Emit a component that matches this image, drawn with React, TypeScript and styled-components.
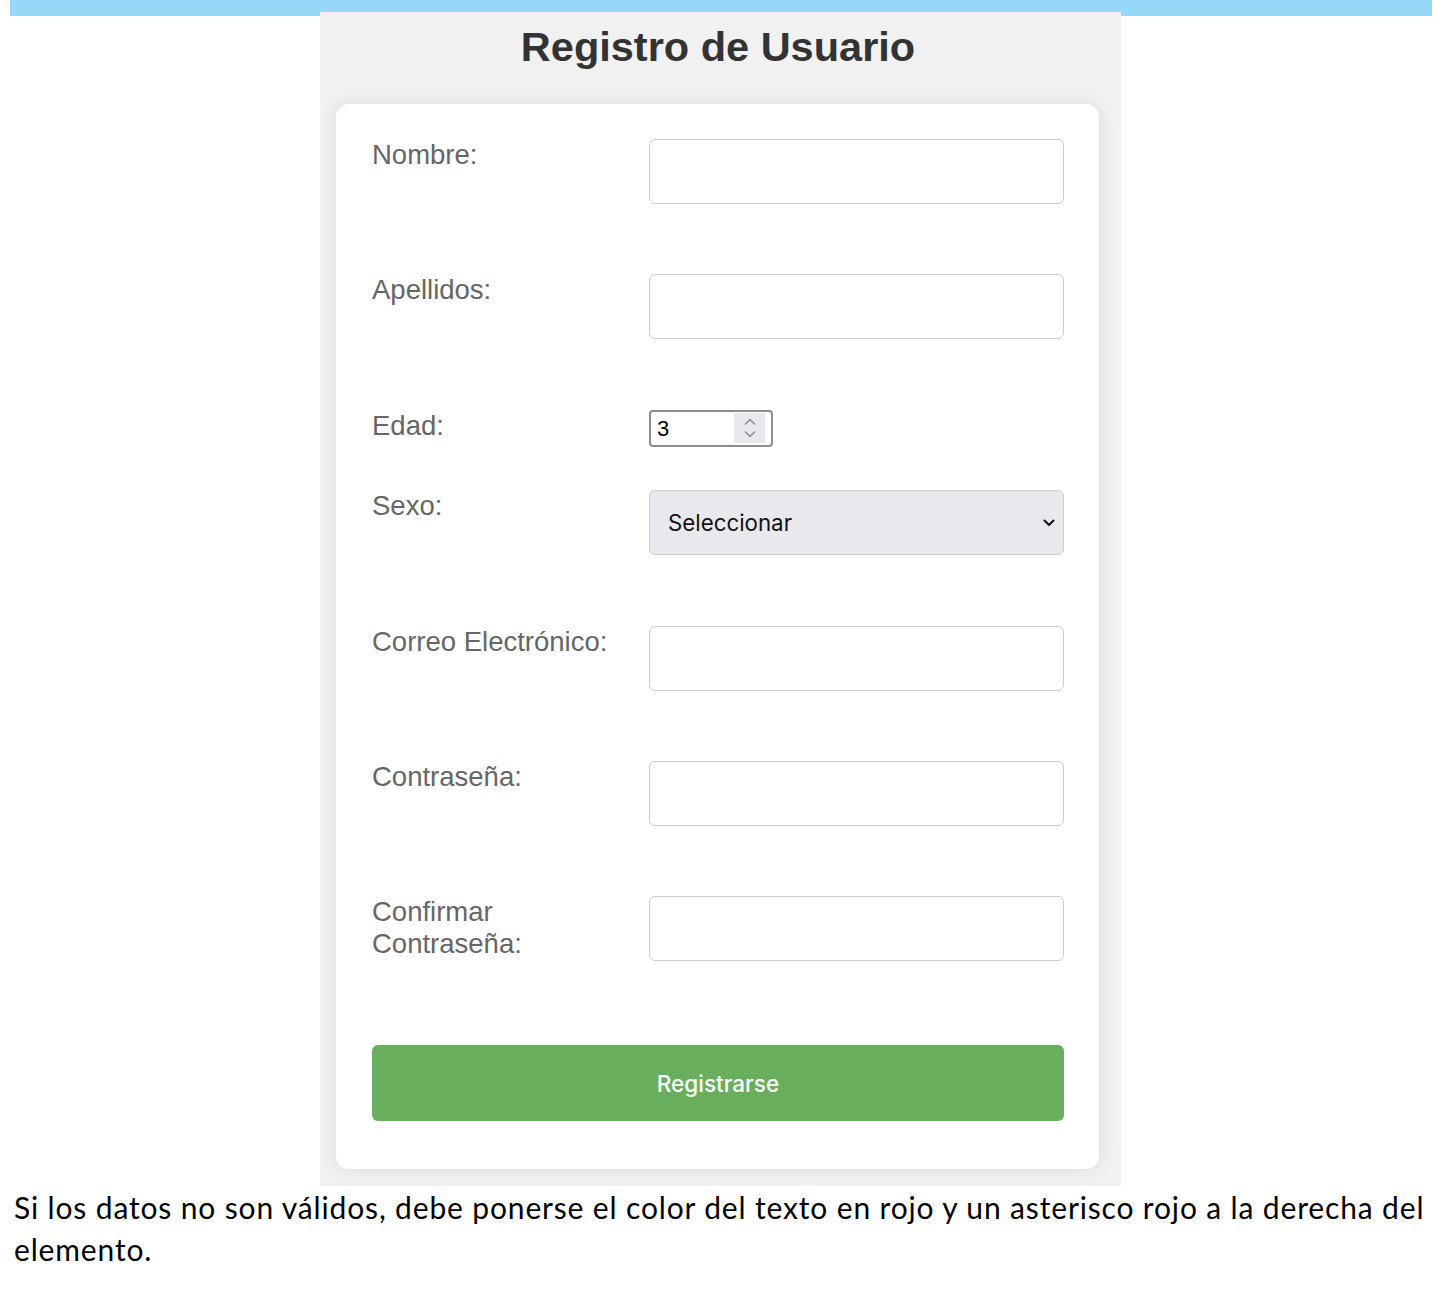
import React from "react";
import styled, { createGlobalStyle } from "styled-components";

const GlobalStyle = createGlobalStyle`
  html, body {
    margin: 0;
    padding: 0;
    background: #ffffff;
  }
  * { box-sizing: border-box; }
`;

const Page = styled.div`
  display: flex;
  flex-direction: column;
  width: 1446px;
  min-height: 1296px;
  background: #ffffff;
`;

const TopBar = styled.div`
  height: 16px;
  margin: 0 14px 0 10px;
  background: #96d8f8;
`;

const Panel = styled.main`
  position: relative;
  width: 801px;
  margin: -4px 0 0 320px;
  padding: 11px 22px 17px 16px;
  background: #f1f1f1;
  display: flex;
  flex-direction: column;
`;

const Title = styled.h1`
  margin: 0 0 33px 0;
  text-align: center;
  font-family: "Liberation Sans", Arial, sans-serif;
  font-weight: 700;
  font-size: 41.5px;
  line-height: 48px;
  color: #333333;
  padding-left: 1px;
`;

const Card = styled.form`
  background: #ffffff;
  border-radius: 13px;
  box-shadow: 0 0 18px rgba(0, 0, 0, 0.09);
  padding: 35px 35px 48px 36px;
  display: flex;
  flex-direction: column;
`;

const Row = styled.div`
  display: grid;
  grid-template-columns: 260px 1fr;
  column-gap: 17px;
  align-items: start;
  margin-bottom: 43.4px;
`;

const Label = styled.label`
  font-family: "Liberation Sans", Arial, sans-serif;
  font-size: 27.5px;
  line-height: 32px;
  color: #666666;
`;

const TextInput = styled.input`
  display: block;
  width: 415px;
  height: 65px;
  margin: 0 0 27px 0;
  padding: 0 16px;
  border: 1.5px solid #cccccc;
  border-radius: 6px;
  background: #ffffff;
  font-family: "Inter", sans-serif;
  font-size: 21px;
  outline: none;
`;

const NumberBox = styled.div`
  display: flex;
  align-items: center;
  width: 124px;
  height: 37px;
  padding: 2px 6px 2px 6px;
  border: 2px solid #8d8d93;
  border-radius: 4px;
  background: #ffffff;
`;

const NumberField = styled.input`
  flex: 1;
  min-width: 0;
  height: 100%;
  border: none;
  outline: none;
  padding: 2px 0 0 0;
  background: transparent;
  font-family: "Liberation Sans", Arial, sans-serif;
  font-size: 22px;
  color: #000000;
`;

const Spinner = styled.div`
  width: 31px;
  height: 30px;
  background: #e8e8ed;
  display: flex;
  align-items: center;
  justify-content: center;
`;

const SelectWrap = styled.div`
  position: relative;
  width: 415px;
  margin-bottom: 27px;
`;

const Select = styled.select`
  display: block;
  width: 100%;
  height: 65px;
  padding: 0 40px 0 18px;
  border: 1.5px solid #cccccc;
  border-radius: 6px;
  background: #e9e9ed;
  appearance: none;
  -webkit-appearance: none;
  font-family: "Inter", sans-serif;
  font-size: 22.3px;
  color: #111111;
  outline: none;
`;

const Chevron = styled.svg`
  position: absolute;
  right: 9px;
  top: 29px;
  pointer-events: none;
`;

const SubmitButton = styled.button`
  margin-top: 13.6px;
  height: 76px;
  width: 100%;
  border: none;
  border-radius: 6px;
  background: #69ae5d;
  color: #ffffff;
  font-family: "Inter", sans-serif;
  font-size: 22.5px;
  font-weight: 500;
  cursor: pointer;
`;

const Note = styled.p`
  margin: 0 14px 0 14px;
  font-family: "Lato", "Noto Sans", sans-serif;
  font-size: 30px;
  letter-spacing: 0.85px;
  line-height: 42px;
  color: #000000;
`;

type TextRowProps = { id: string; label: React.ReactNode; type?: string };

const TextRow = ({ id, label, type = "text" }: TextRowProps) => (
  <Row>
    <Label htmlFor={id}>{label}</Label>
    <TextInput id={id} type={type} />
  </Row>
);

export default function App() {
  return (
    <>
      <GlobalStyle />
      <Page>
        <TopBar />
        <Panel>
          <Title>Registro de Usuario</Title>
          <Card onSubmit={(e) => e.preventDefault()}>
            <TextRow id="nombre" label="Nombre:" />
            <TextRow id="apellidos" label="Apellidos:" />
            <Row>
              <Label htmlFor="edad">Edad:</Label>
              <NumberBox>
                <NumberField id="edad" defaultValue="3" />
                <Spinner>
                  <svg width="14" height="22" viewBox="0 0 14 22" fill="none">
                    <path d="M2.5 7 L7 2.5 L11.5 7" stroke="#8e8e93" strokeWidth="1.6" strokeLinecap="round" strokeLinejoin="round" />
                    <path d="M2.5 15 L7 19.5 L11.5 15" stroke="#8e8e93" strokeWidth="1.6" strokeLinecap="round" strokeLinejoin="round" />
                  </svg>
                </Spinner>
              </NumberBox>
            </Row>
            <Row>
              <Label htmlFor="sexo">Sexo:</Label>
              <SelectWrap>
                <Select id="sexo" defaultValue="">
                  <option value="">Seleccionar</option>
                  <option value="m">Masculino</option>
                  <option value="f">Femenino</option>
                </Select>
                <Chevron width="12" height="8" viewBox="0 0 12 8" fill="none">
                  <path d="M1.5 1.5 L6 6 L10.5 1.5" stroke="#111" strokeWidth="2" strokeLinecap="round" strokeLinejoin="round" />
                </Chevron>
              </SelectWrap>
            </Row>
            <TextRow id="correo" label="Correo Electrónico:" type="email" />
            <TextRow id="pass" label="Contraseña:" type="password" />
            <TextRow id="pass2" label={<>Confirmar<br />Contraseña:</>} type="password" />
            <SubmitButton type="submit">Registrarse</SubmitButton>
          </Card>
        </Panel>
        <Note>
          Si los datos no son válidos, debe ponerse el color del texto en rojo y un asterisco rojo a la derecha del elemento.
        </Note>
      </Page>
    </>
  );
}
